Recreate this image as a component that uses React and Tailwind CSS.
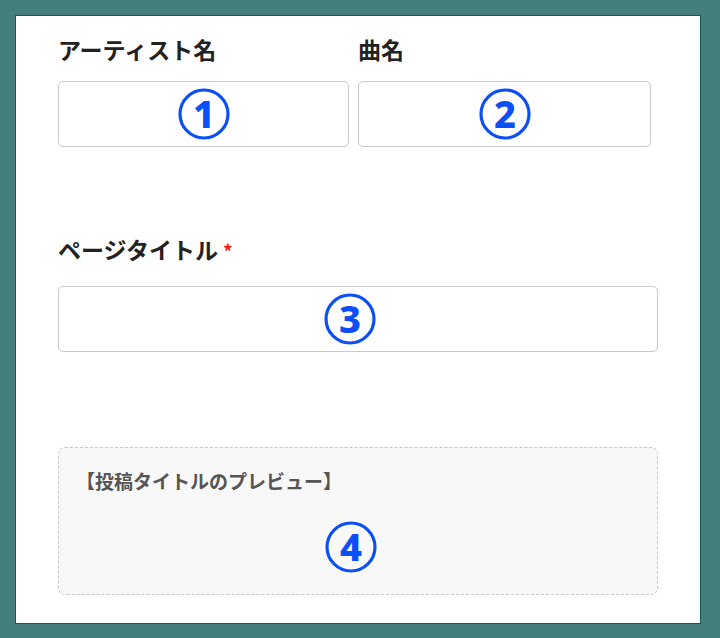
import React from "react";

function Marker({ n }) {
  return (
    <svg width="54" height="54" viewBox="0 0 54 54" className="block">
      <circle cx="27" cy="27" r="24" fill="none" stroke="#fff" strokeWidth="6" />
      <circle cx="27" cy="27" r="24" fill="none" stroke="#0b4ff5" strokeWidth="3.2" />
      <text
        x="27"
        y="40.5"
        textAnchor="middle"
        fontFamily="'Noto Sans', 'Liberation Sans', sans-serif"
        fontWeight="800"
        fontSize="38"
        fill="#0b4ff5"
        stroke="#fff"
        strokeWidth="0.6"
        paintOrder="stroke"
      >
        {n}
      </text>
    </svg>
  );
}

function Label({ children, required }) {
  return (
    <div className="flex items-baseline text-[23px] leading-[30px] font-bold text-[#222]">
      <span>{children}</span>
      {required && <span className="ml-[5px] text-[19px] text-[#ff1a1a]">*</span>}
    </div>
  );
}

export default function App() {
  return (
    <div
      className="w-[720px] h-[638px] bg-[#457f7c] pt-[15px] pl-[15px]"
      style={{ fontFamily: "'Noto Sans CJK JP', 'Noto Sans', sans-serif" }}
    >
      <div className="w-[686px] h-[609px] bg-white border border-[#125a55] pl-[42px] pt-[18px]">
        <div className="flex gap-[9px]">
          <div className="w-[291px]">
            <Label>アーティスト名</Label>
            <div className="mt-[17px] h-[66px] rounded-[5px] border border-[#c9c9c9] flex items-center justify-center">
              <Marker n="1" />
            </div>
          </div>
          <div className="w-[293px]">
            <Label>曲名</Label>
            <div className="mt-[17px] h-[66px] rounded-[5px] border border-[#c9c9c9] flex items-center justify-center">
              <Marker n="2" />
            </div>
          </div>
        </div>

        <div className="mt-[87px] w-[600px]">
          <Label required>ページタイトル</Label>
          <div className="mt-[20px] h-[66px] rounded-[5px] border border-[#c9c9c9] flex items-center justify-center pr-[16px]">
            <Marker n="3" />
          </div>
        </div>

        <div className="mt-[95px] w-[600px] h-[148px] rounded-[7px] border border-dashed border-[#c8c8c8] bg-[#f8f8f8] pt-[20px] pl-[17px]">
          <div className="text-[19px] leading-[26px] font-bold text-[#555]">【投稿タイトルのプレビュー】</div>
          <div className="mt-[26px] ml-[248px]">
            <Marker n="4" />
          </div>
        </div>
      </div>
    </div>
  );
}
